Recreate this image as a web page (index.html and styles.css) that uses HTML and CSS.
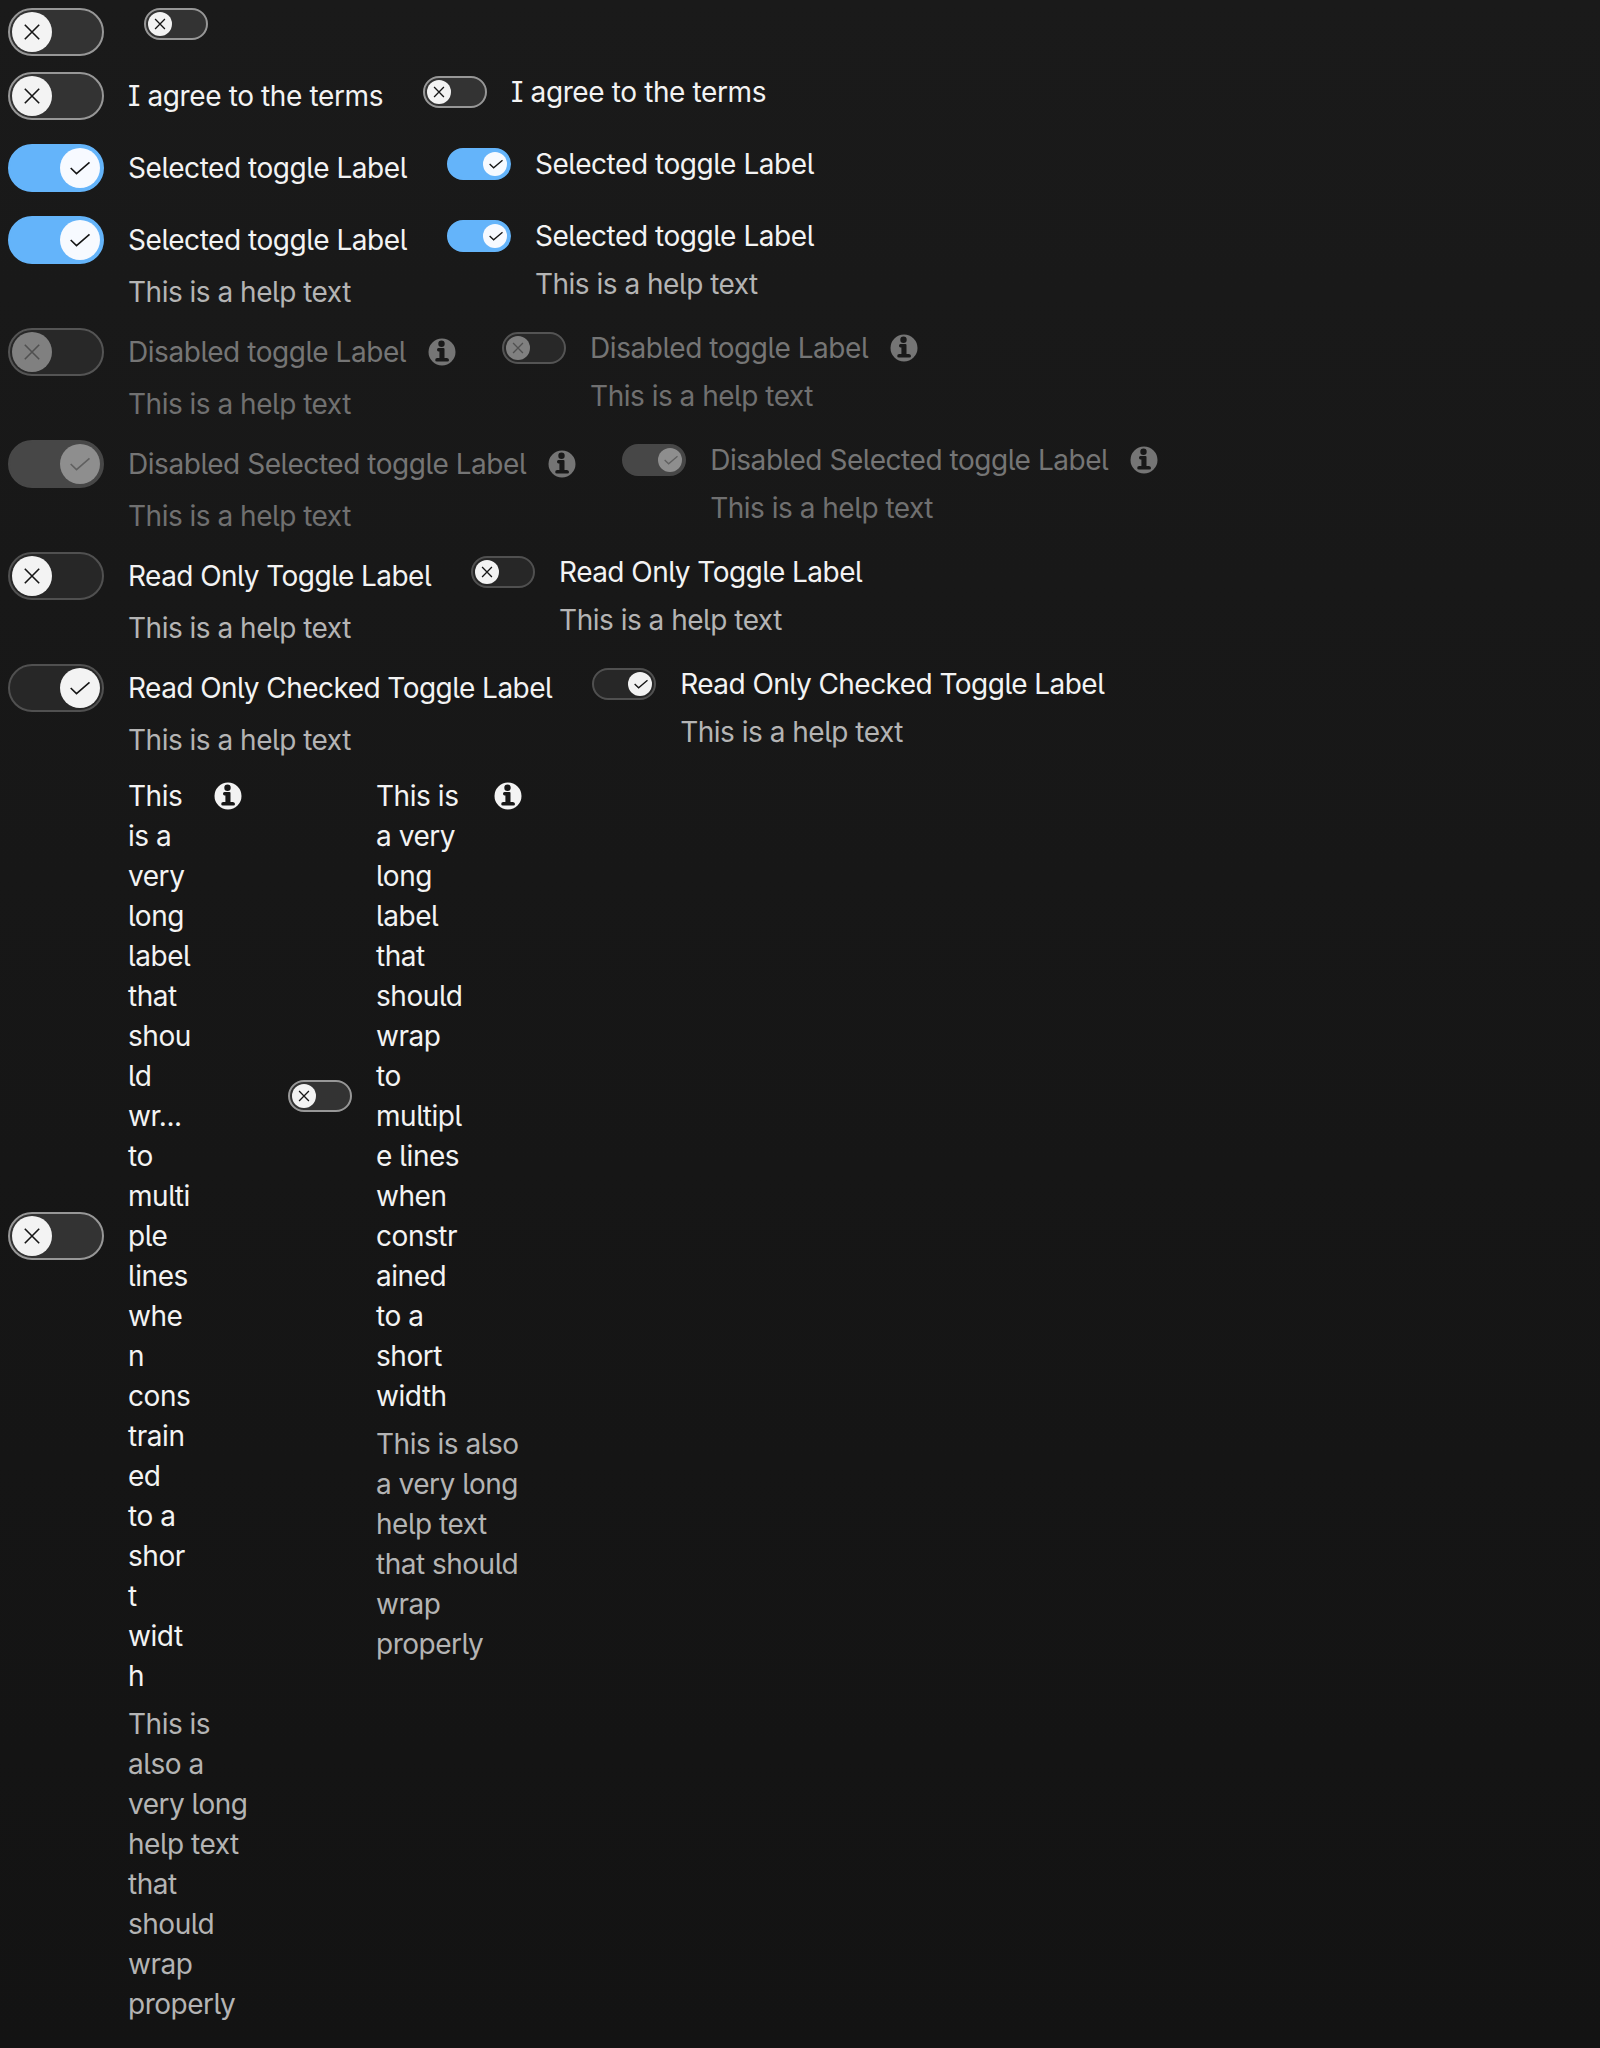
FILE: index.html
```html
<!DOCTYPE html>
<html lang="en">
<head>
<meta charset="utf-8">
<title>Toggles</title>
<link rel="stylesheet" href="styles.css">
</head>
<body>
<svg width="0" height="0" class="defs">
  <symbol id="x" viewBox="0 0 40 40"><path d="M12.8 12.8L27.2 27.2M27.2 12.8L12.8 27.2"/></symbol>
  <symbol id="check" viewBox="0 0 40 40"><path d="M10.7 20L16.5 25.6L29.5 14.4"/></symbol>
  <symbol id="info" viewBox="0 0 28 28"><path fill-rule="evenodd" d="M14 0.5a13.5 13.5 0 1 0 0 27a13.5 13.5 0 1 0 0-27zM13.5 2.5a3.2 3.2 0 1 1 0 6.4a3.2 3.2 0 1 1 0-6.4zM10.500 10H15.500Q16.500 10 16.500 11V20H19Q21 20.300 21 22Q21 23.500 19.500 23.500H9Q7.200 23.500 7.200 22Q7.300 20.200 9.200 20H11.400V13.500H10.500Q9 13.500 9 11.800Q9 10 10.500 10Z"/></symbol>
</svg>
<main class="page">
  <div class="row bare">
    <div class="toggle"><span class="track"><svg class="knob"><use href="#x"/></svg></span></div>
    <div class="toggle small"><span class="track"><svg class="knob"><use href="#x"/></svg></span></div>
  </div>
  <div class="row terms">
    <div class="toggle"><span class="track"><svg class="knob"><use href="#x"/></svg></span><div class="text"><div class="label">I agree to the terms</div></div></div>
    <div class="toggle small"><span class="track"><svg class="knob"><use href="#x"/></svg></span><div class="text"><div class="label">I agree to the terms</div></div></div>
  </div>
  <div class="row">
    <div class="toggle on"><span class="track"><svg class="knob"><use href="#check"/></svg></span><div class="text"><div class="label">Selected toggle Label</div></div></div>
    <div class="toggle small on"><span class="track"><svg class="knob"><use href="#check"/></svg></span><div class="text"><div class="label">Selected toggle Label</div></div></div>
  </div>
  <div class="row helped">
    <div class="toggle on"><span class="track"><svg class="knob"><use href="#check"/></svg></span><div class="text"><div class="label">Selected toggle Label</div><div class="help">This is a help text</div></div></div>
    <div class="toggle small on"><span class="track"><svg class="knob"><use href="#check"/></svg></span><div class="text"><div class="label">Selected toggle Label</div><div class="help">This is a help text</div></div></div>
  </div>
  <div class="row helped">
    <div class="toggle disabled"><span class="track"><svg class="knob"><use href="#x"/></svg></span><div class="text"><div class="label">Disabled toggle Label<svg class="info"><use href="#info"/></svg></div><div class="help">This is a help text</div></div></div>
    <div class="toggle small disabled"><span class="track"><svg class="knob"><use href="#x"/></svg></span><div class="text"><div class="label">Disabled toggle Label<svg class="info"><use href="#info"/></svg></div><div class="help">This is a help text</div></div></div>
  </div>
  <div class="row helped">
    <div class="toggle on disabled"><span class="track"><svg class="knob"><use href="#check"/></svg></span><div class="text"><div class="label">Disabled Selected toggle Label<svg class="info"><use href="#info"/></svg></div><div class="help">This is a help text</div></div></div>
    <div class="toggle small on disabled"><span class="track"><svg class="knob"><use href="#check"/></svg></span><div class="text"><div class="label">Disabled Selected toggle Label<svg class="info"><use href="#info"/></svg></div><div class="help">This is a help text</div></div></div>
  </div>
  <div class="row helped">
    <div class="toggle readonly"><span class="track"><svg class="knob"><use href="#x"/></svg></span><div class="text"><div class="label">Read Only Toggle Label</div><div class="help">This is a help text</div></div></div>
    <div class="toggle small readonly"><span class="track"><svg class="knob"><use href="#x"/></svg></span><div class="text"><div class="label">Read Only Toggle Label</div><div class="help">This is a help text</div></div></div>
  </div>
  <div class="row helped">
    <div class="toggle on readonly"><span class="track"><svg class="knob"><use href="#check"/></svg></span><div class="text"><div class="label">Read Only Checked Toggle Label</div><div class="help">This is a help text</div></div></div>
    <div class="toggle small on readonly"><span class="track"><svg class="knob"><use href="#check"/></svg></span><div class="text"><div class="label">Read Only Checked Toggle Label</div><div class="help">This is a help text</div></div></div>
  </div>
  <div class="row wrapped">
    <div class="toggle"><span class="track"><svg class="knob"><use href="#x"/></svg></span><div class="text"><div class="label"><span>This<br>is a<br>very<br>long<br>label<br>that<br>shou<br>ld<br>wr...<br>to<br>multi<br>ple<br>lines<br>whe<br>n<br>cons<br>train<br>ed<br>to a<br>shor<br>t<br>widt<br>h</span><svg class="info"><use href="#info"/></svg></div><div class="help">This is<br>also a<br>very long<br>help text<br>that<br>should<br>wrap<br>properly</div></div></div>
    <div class="toggle small"><span class="track"><svg class="knob"><use href="#x"/></svg></span><div class="text"><div class="label"><span>This is<br>a very<br>long<br>label<br>that<br>should<br>wrap<br>to<br>multipl<br>e lines<br>when<br>constr<br>ained<br>to a<br>short<br>width</span><svg class="info"><use href="#info"/></svg></div><div class="help">This is also<br>a very long<br>help text<br>that should<br>wrap<br>properly</div></div></div>
  </div>
</main>
</body>
</html>
```
FILE: styles.css
```css
* { box-sizing: border-box; }
body {
  margin: 0;
  height: 2048px;
  background: linear-gradient(#1a1a1a, #131313);
  color: #f3f3f3;
  font: 400 28px/40px Inter, "Liberation Sans", sans-serif;
  font-feature-settings: "cv05", "cv08";
  letter-spacing: -0.45px;
  overflow: hidden;
}
.defs { position: absolute; }
.page { padding: 8px; }
.row { display: flex; align-items: flex-start; gap: 40px; height: 72px; }
.row.bare { height: 64px; }
.row.helped { height: 112px; }
.toggle { display: flex; align-items: flex-start; gap: 24px; }
.track {
  flex: none;
  display: flex;
  width: 96px;
  height: 48px;
  padding: 2px;
  border: 2px solid #979797;
  border-radius: 24px;
  background: #333;
}
.knob {
  width: 40px;
  height: 40px;
  border-radius: 50%;
  background: #f3f3f3;
  fill: none;
  stroke: #161616;
  stroke-width: 1.6;
}
.text { padding-top: 4px; }
.label { display: flex; align-items: flex-start; white-space: nowrap; }
.help { margin-top: 12px; color: #b4b4b4; white-space: nowrap; letter-spacing: -0.5px; }
.info { flex: none; width: 28px; height: 28px; margin: 6px 6px 0 22px; fill: currentColor; }

.small { padding-top: 4px; }
.bare .small { padding-top: 0; }
.small .track { width: 64px; height: 32px; }
.small .knob { width: 24px; height: 24px; stroke-width: 1.9; }
.small .knob use { transform: scale(1.14); transform-origin: 12px 12px; }
.small.on .knob use { transform: translateX(1px) scale(1.14); }
.small .text { padding: 0; margin-top: -4px; }
.small .help { margin-top: 8px; }

.terms .label { letter-spacing: -0.38px; }

.on .track { justify-content: flex-end; background: #64b4fa; border-color: #64b4fa; }
.on .knob { background: #f7faff; }

.disabled { color: #757575; }
.disabled .help { color: #707070; }
.disabled .track { background: #282828; border-color: #545454; }
.disabled .knob { background: #808080; stroke: #505050; }
.disabled.on .track { background: #474747; border-color: #474747; }
.disabled.on .knob { background: #8e8e8e; stroke: #606060; }

.disabled .label { letter-spacing: -0.45px; }
.readonly .label { letter-spacing: -0.54px; }
.readonly .track { background: #272727; border-color: #505050; }
.readonly .knob { background: #f3f3f3; }

/* The track centres on the label only; the help text takes a row of its own. */
.wrapped .toggle {
  display: grid;
  grid-template-columns: auto 120px;
  gap: 8px 24px;
  align-items: center;
  padding: 0;
}
.wrapped .small { grid-template-columns: auto 152px; }
.wrapped .text { display: contents; }
.wrapped .label { justify-content: space-between; }
.wrapped .help, .wrapped .small .help { grid-column: 2; margin: 0; }
.wrapped .info { margin-left: 0; }
```
